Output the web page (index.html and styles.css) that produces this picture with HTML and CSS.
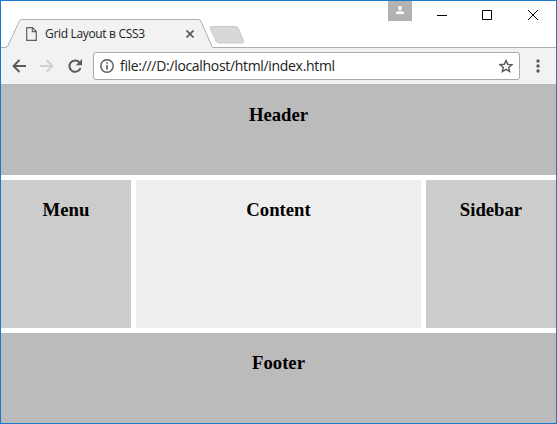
FILE: index.html
```html
<!DOCTYPE html>
<html lang="ru">
<head>
<meta charset="utf-8">
<title>Grid Layout в CSS3</title>
<link rel="stylesheet" href="styles.css">
</head>
<body>
<div class="window">
  <div class="titlebar">
    <div class="tab">
      <svg class="tab-shape" width="213" height="30" viewBox="0 0 213 30"><path d="M0 30V28.500H5.500L19 2.500Q20 .5 21 .5H197Q199 .5 200 2.500L211 28.500H213V30Z" fill="#f2f2f2"/><path d="M0 28.500H4Q6 28.500 7 26.500L18.500 2Q19.200 .5 20.500 .5H197.500Q199 .5 200 2.500L211 27.500Q211.500 28.500 213 28.500" fill="none" stroke="#adadad"/></svg>
      <svg class="file-icon" width="11" height="14" viewBox="0 0 11 14"><path d="M.7.7H6.500L10.300 4.500V13.300H.7ZM6.300.7V4.700H10.300" fill="none" stroke="#606060" stroke-width="1.200"/></svg>
      <span class="tab-title">Grid Layout в CSS3</span>
      <svg class="tab-close" width="8" height="8" viewBox="0 0 8 8"><path d="M.5.500 7.500 7.500M7.500.5.5 7.500" stroke="#5a5a5a" stroke-width="1.700"/></svg>
    </div>
    <svg class="new-tab" width="36" height="18" viewBox="0 0 36 18"><path d="M2.500.5H26.500Q28.500.5 29.200 2L34.500 15Q35 17 33.500 17H10Q8 17 7.200 15.500L1.200 2.500Q.5.5 2.500.5Z" fill="#d8d8d8" stroke="#c9c9c9"/></svg>
    <div class="controls">
      <div class="user"><svg width="8" height="9" viewBox="0 0 8 9"><circle cx="4" cy="2" r="1.900" fill="#fff"/><path d="M0 8V6.800Q.3 5 4 5T8 6.800V8Z" fill="#fff"/></svg></div>
      <svg class="win-buttons" width="102" height="12" viewBox="0 0 102 12"><path d="M0 6.500H10M45.500 1.500H54.500V10.500H45.500ZM91 1 101 11M101 1 91 11" fill="none" stroke="#000"/></svg>
    </div>
  </div>
  <div class="toolbar">
    <svg class="nav" width="72" height="16" viewBox="0 0 72 16"><path d="M14 8H1.500M7.500 2 1.500 8 7.500 14" fill="none" stroke="#5a5a5a" stroke-width="1.900"/><path d="M28 8H40.500M34.500 2 40.500 8 34.500 14" fill="none" stroke="#d0d0d0" stroke-width="1.900"/><path d="M67.300 4.200A5.700 5.700 0 1 0 68.500 10" fill="none" stroke="#5a5a5a" stroke-width="2"/><path d="M70 1V7.200H63.800Z" fill="#5a5a5a"/></svg>
    <div class="address">
      <svg width="14" height="14" viewBox="0 0 14 14"><circle cx="7" cy="7" r="6.200" fill="none" stroke="#5a5a5a" stroke-width="1.400"/><path d="M7 3.200V4.700M7 6V10.800" stroke="#5a5a5a" stroke-width="1.600"/></svg>
      <span class="url">file:///D:/localhost/html/index.html</span>
      <svg class="star" width="14" height="14" viewBox="0 0 14 14"><path d="M7 1.500 8.700 5.300 12.900 5.700 9.700 8.400 10.700 12.500 7 10.300 3.300 12.500 4.300 8.400 1.100 5.700 5.300 5.300Z" fill="none" stroke="#5a5a5a" stroke-width="1.400"/></svg>
    </div>
    <svg class="more" width="4" height="14" viewBox="0 0 4 14" fill="#5a5a5a"><circle cx="2" cy="2" r="1.700"/><circle cx="2" cy="7" r="1.700"/><circle cx="2" cy="12" r="1.700"/></svg>
  </div>
  <div class="page">
    <header class="header"><h3>Header</h3></header>
    <nav class="side"><h3>Menu</h3></nav>
    <main class="content"><h3>Content</h3></main>
    <aside class="side"><h3>Sidebar</h3></aside>
    <footer class="footer"><h3>Footer</h3></footer>
  </div>
</div>
</body>
</html>
```
FILE: styles.css
```css
* { box-sizing: border-box; }
body { margin: 0; background: #fff; }
svg { display: block; flex: none; }
.window {
  width: 557px;
  height: 424px;
  border: 1px solid #1979ca;
  display: flex;
  flex-direction: column;
}
.titlebar {
  height: 47px;
  display: flex;
  background: linear-gradient(#adadad, #adadad) 0 46px / 100% 1px no-repeat;
  font-family: "Open Sans", "Noto Sans", sans-serif;
}
.tab {
  position: relative;
  width: 213px;
  height: 30px;
  margin-top: 18px;
  padding-left: 25px;
  display: flex;
  align-items: center;
}
.tab-shape { position: absolute; left: 0; top: 0; }
.file-icon, .tab-title, .tab-close { position: relative; }
.tab-title {
  width: 141px;
  margin-left: 8px;
  font-size: 12px;
  line-height: 16px;
  letter-spacing: -0.33px;
  color: #222;
  white-space: nowrap;
}
.new-tab { margin: 25px 0 0 -5px; }
.controls { margin-left: auto; display: flex; }
.user {
  width: 24px;
  height: 20px;
  background: #b2b2b2;
  display: flex;
  justify-content: center;
  padding-top: 5px;
}
.win-buttons { margin: 8px 17px 0 25px; }
.toolbar {
  height: 36px;
  background: #f2f2f2;
  display: flex;
  align-items: center;
  padding: 0 16px 0 11px;
}
.address {
  width: 427px;
  height: 28px;
  margin-left: 9px;
  padding: 0 6px;
  background: #fff;
  border: 1px solid #a9a9a9;
  border-radius: 3px;
  display: flex;
  align-items: center;
}
.url {
  margin-left: 6px;
  font: 14px/20px "Open Sans", "Noto Sans", sans-serif;
  letter-spacing: -0.32px;
  color: #222;
}
.star { margin-left: auto; }
.more { margin-left: auto; }
.page {
  flex: 1;
  display: grid;
  grid-template-columns: 130px 1fr 130px;
  grid-template-rows: 91px 148px 90px;
  gap: 5px;
  font-family: "Liberation Serif", serif;
  text-align: center;
}
h3 { margin: 19px 0 0; font-size: 18.72px; line-height: 22px; }
.header, .footer { grid-column: 1 / -1; background: #bbb; }
.header { border-top: 1px solid #b6b6b6; }
.side { background: #ccc; }
.content { background: #eee; }
```
